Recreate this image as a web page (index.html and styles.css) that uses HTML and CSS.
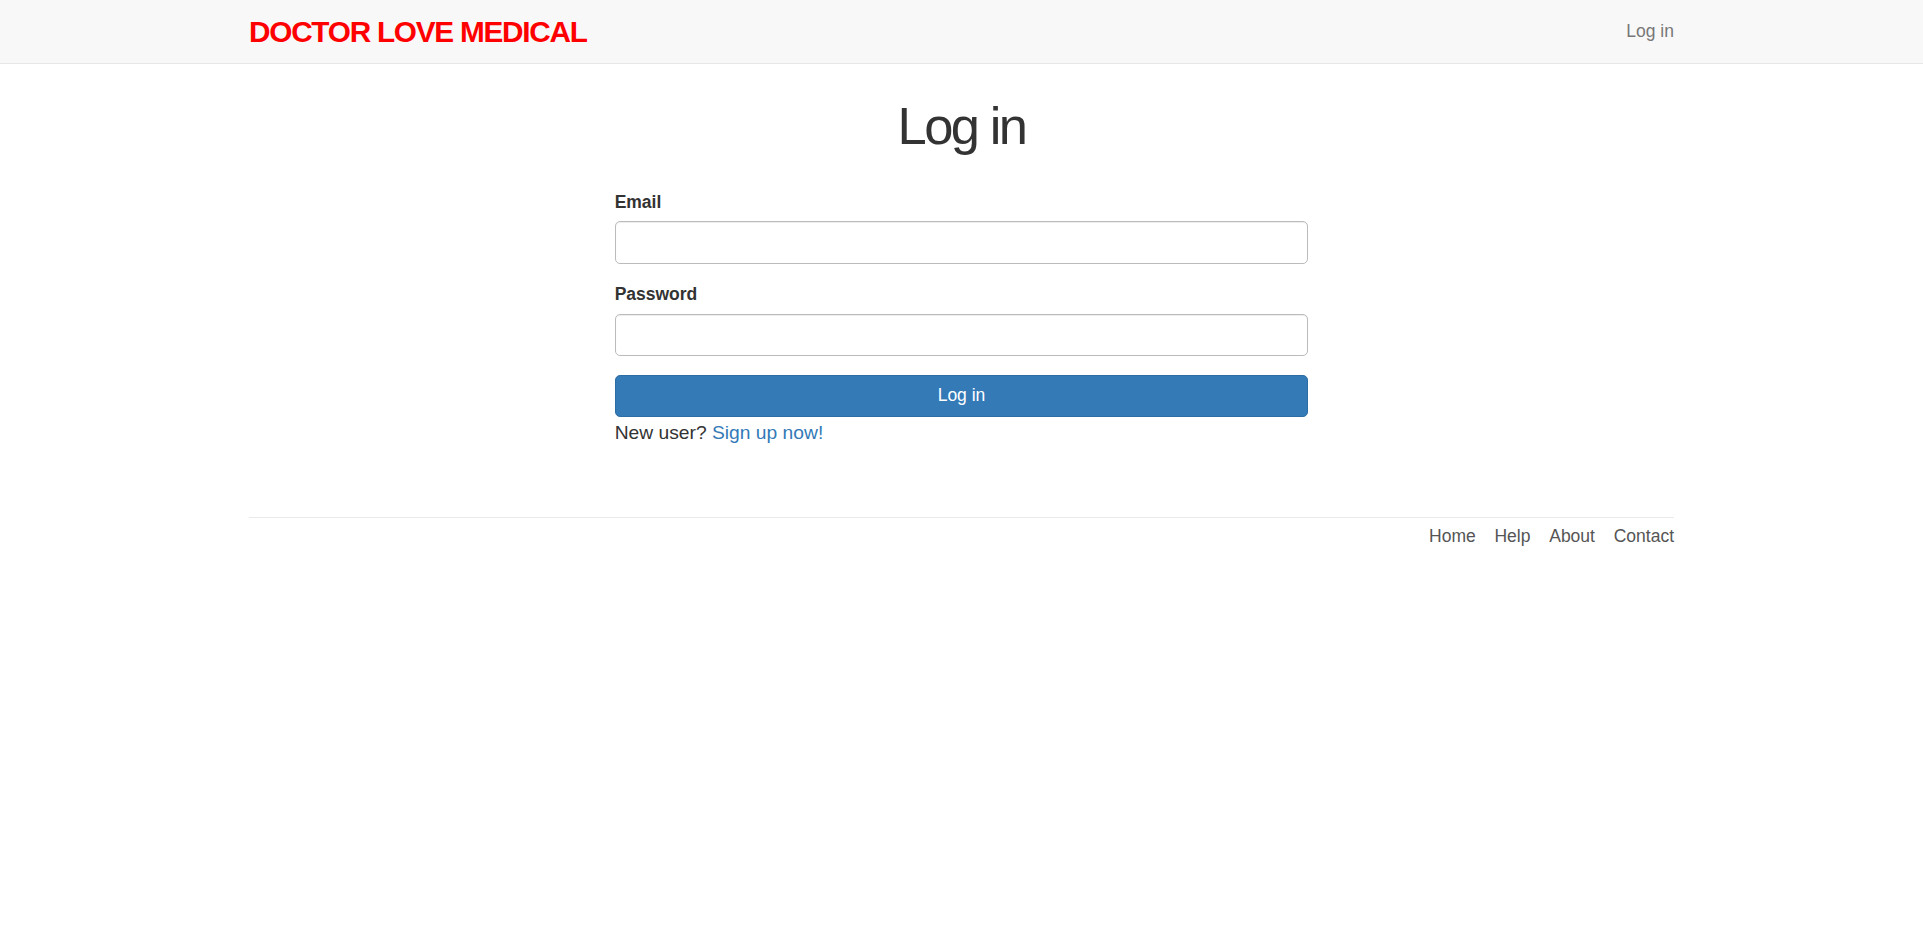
FILE: index.html
```html
<!DOCTYPE html>
<html lang="en">
<head>
<meta charset="utf-8">
<title>Log in | Doctor Love Medical</title>
<link rel="stylesheet" href="styles.css">
</head>
<body>
<header class="navbar">
  <div class="container navbar-inner">
    <a class="logo" href="#">Doctor love medical</a>
    <nav>
      <ul class="nav-list">
        <li><a class="nav-link" href="#">Log in</a></li>
      </ul>
    </nav>
  </div>
</header>
<div class="container main">
  <h1 class="page-title">Log in</h1>
  <div class="form-col">
    <form class="login-form">
      <label class="field-label" for="email">Email</label>
      <input class="form-control" type="email" id="email">
      <label class="field-label" for="password">Password</label>
      <input class="form-control" type="password" id="password">
      <input class="btn-primary" type="submit" value="Log in">
    </form>
    <p class="signup">New user? <a class="link" href="#">Sign up now!</a></p>
  </div>
  <footer class="footer">
    <ul class="footer-links">
      <li><a href="#">Home</a></li>
      <li><a href="#">Help</a></li>
      <li><a href="#">About</a></li>
      <li><a href="#">Contact</a></li>
    </ul>
  </footer>
</div>
</body>
</html>
```
FILE: styles.css
```css
* { box-sizing: border-box; }
html, body { margin: 0; padding: 0; }
body {
  font-family: "Liberation Sans", Arial, Helvetica, sans-serif;
  font-size: 17.5px;
  line-height: 25px;
  color: #333;
  background: #fff;
}
a { text-decoration: none; }
.container {
  width: 1462.5px;
  margin: 0 auto;
  padding: 0 18.75px;
}
.navbar {
  background: #f8f8f8;
  border-bottom: 1px solid #e7e7e7;
  height: 63.5px;
}
.navbar-inner {
  display: flex;
  justify-content: space-between;
  align-items: flex-start;
}
.logo {
  font-size: 29.75px;
  line-height: 42.5px;
  padding-top: 11.25px;
  font-weight: bold;
  letter-spacing: -1.25px;
  text-transform: uppercase;
  color: #ff0000;
}
.nav-list {
  list-style: none;
  margin: 0 -18.75px 0 0;
  padding: 0;
  display: flex;
}
.nav-link {
  display: block;
  padding: 18.75px;
  line-height: 25px;
  color: #777;
}
.main {
  padding-top: 11.5px;
}
.page-title {
  margin: 25px 0 37.5px;
  font-size: 52.5px;
  line-height: 1;
  letter-spacing: -2.5px;
  font-weight: 500;
  text-align: center;
  color: #333;
}
.form-col {
  width: 693.75px;
  margin: 0 auto;
}
.login-form { margin: 0; }
.field-label {
  display: inline-block;
  font-weight: bold;
  margin-bottom: 6.25px;
  line-height: 25px;
}
.form-control {
  display: block;
  width: 100%;
  height: 42.5px;
  padding: 7.5px 15px;
  font: inherit;
  border: 1px solid #bbb;
  border-radius: 5px;
  box-shadow: inset 0 1px 1px rgba(0,0,0,.075);
  margin: 0 0 18.5px;
  background: #fff;
}
.btn-primary {
  display: block;
  width: 100%;
  height: 42.5px;
  padding: 7.5px 15px;
  font: inherit;
  color: #fff;
  background: #337ab7;
  border: 1px solid #2e6da4;
  border-radius: 5px;
  margin: 0;
  cursor: pointer;
}
.signup {
  font-size: 19.25px;
  line-height: 32.725px;
  margin: 0 0 12.5px;
}
.link { color: #337ab7; }
.footer {
  margin-top: 67.5px;
  padding-top: 6.25px;
  border-top: 1px solid #eaeaea;
  display: flex;
  justify-content: flex-end;
}
.footer-links {
  list-style: none;
  margin: 0 0 12.5px;
  padding: 0;
  display: flex;
  gap: 18.75px;
}
.footer-links a { color: #555; }
```
